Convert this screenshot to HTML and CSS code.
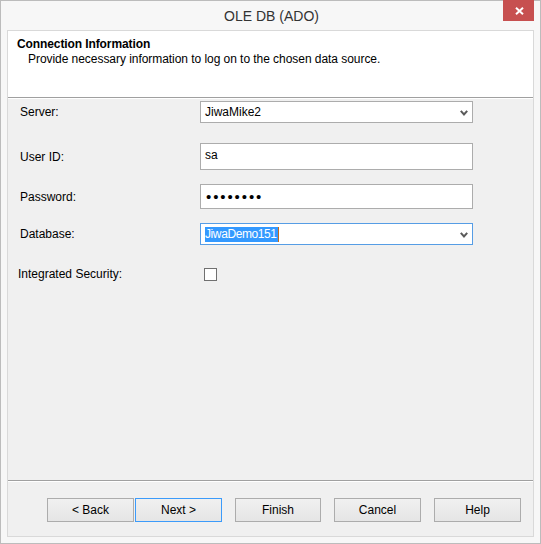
FILE: index.html
```html
<!DOCTYPE html>
<html>
<head>
<meta charset="utf-8">
<link rel="stylesheet" href="styles.css">
</head>
<body>
<div class="window">
  <div class="titlebar">
    <span class="title">OLE DB (ADO)</span>
    <div class="close">
      <svg width="9" height="8" viewBox="0 0 9 8"><path d="M1 0.8 L8 7.2 M8 0.8 L1 7.2" stroke="#fff" stroke-width="2" fill="none"/></svg>
    </div>
  </div>
  <div class="client">
    <div class="header">
      <div class="heading">Connection Information</div>
      <div class="subtitle">Provide necessary information to log on to the chosen data source.</div>
    </div>
    <div class="sep"></div>
    <div class="form">
      <div class="row row-server">
        <span class="label">Server:</span>
        <div class="combo combo-server"><span class="value">JiwaMike2</span>
          <svg class="chev" width="8" height="6" viewBox="0 0 8 6"><path d="M0.8 0.8 L4 4.4 L7.2 0.8" stroke="#5a5a5a" stroke-width="2" fill="none"/></svg>
        </div>
      </div>
      <div class="row row-user">
        <span class="label">User ID:</span>
        <div class="textbox textbox-user"><span class="value">sa</span></div>
      </div>
      <div class="row row-pass">
        <span class="label">Password:</span>
        <div class="textbox textbox-pass"><span class="dots">••••••••</span></div>
      </div>
      <div class="row row-db">
        <span class="label">Database:</span>
        <div class="combo combo-db focused"><span class="selected">JiwaDemo151</span><span class="caret"></span>
          <svg class="chev" width="8" height="6" viewBox="0 0 8 6"><path d="M0.8 0.8 L4 4.4 L7.2 0.8" stroke="#5a5a5a" stroke-width="2" fill="none"/></svg>
        </div>
      </div>
      <div class="row row-check">
        <span class="label label-check">Integrated Security:</span>
        <span class="checkbox"></span>
      </div>
    </div>
    <div class="footer">
      <div class="sep"></div>
      <div class="buttons">
        <div class="pair">
          <button class="btn">&lt; Back</button>
          <button class="btn btn-default">Next &gt;</button>
        </div>
        <button class="btn btn-narrow">Finish</button>
        <button class="btn">Cancel</button>
        <button class="btn">Help</button>
      </div>
    </div>
  </div>
</div>
</body>
</html>
```

FILE: styles.css
```css
* { box-sizing: border-box; }
html, body { margin: 0; padding: 0; }
body {
  width: 541px;
  height: 544px;
  font-family: "Liberation Sans", Arial, sans-serif;
  font-size: 12px;
  color: #000;
  background: #f7f7f7;
}
.window {
  position: relative;
  width: 541px;
  height: 544px;
  border: 1px solid #bcbcbc;
  background: #f7f7f7;
  padding: 0 6px 6px 6px;
  display: flex;
  flex-direction: column;
}
.titlebar {
  height: 29px;
  display: flex;
  align-items: center;
  justify-content: center;
  padding-top: 1px;
}
.title {
  font-size: 14px;
  color: #333;
  margin-left: 2px;
}
.close {
  position: absolute;
  top: -1px;
  right: 6px;
  width: 31px;
  height: 21px;
  background: #c75050;
  display: flex;
  align-items: center;
  justify-content: center;
  padding-top: 1px;
  padding-left: 2px;
}
.client {
  flex: 1;
  border: 1px solid #d9d9d9;
  background: #f0f0f0;
  display: flex;
  flex-direction: column;
}
.header {
  height: 66px;
  background: #fff;
  padding: 6px 0 0 9px;
  line-height: 15px;
}
.heading { font-weight: bold; letter-spacing: -0.1px; }
.subtitle { padding-left: 11px; letter-spacing: -0.05px; }
.sep {
  height: 2px;
  border-top: 1px solid #a0a0a0;
  border-bottom: 1px solid #fff;
}
.form {
  flex: 1;
  padding: 2px 0 0 12px;
  display: flex;
  flex-direction: column;
}
.row {
  display: flex;
  align-items: center;
}
.label {
  width: 180px;
  flex: none;
}
.label-check { margin-left: -2px; width: 182px; }
.row-user { margin-top: 20px; }
.row-pass { margin-top: 14px; }
.row-db { margin-top: 14px; }
.row-check { margin-top: 22px; }
.combo, .textbox {
  position: relative;
  width: 273px;
  border: 1px solid #acacac;
  background: #fff;
  display: flex;
  align-items: center;
  padding-left: 4px;
}
.combo { height: 22px; }
.textbox-user { height: 27px; align-items: flex-start; padding-top: 4px; }
.textbox-pass { height: 25px; }
.combo.focused { border-color: #569de5; }
.chev {
  position: absolute;
  right: 4px;
  top: 8px;
}
.selected {
  background: #3399ff;
  color: #fff;
  line-height: 15px;
  letter-spacing: -0.4px;
  padding-right: 1px;
}
.caret {
  width: 1px;
  height: 15px;
  background: #c46a1a;
}
.dots {
  font-size: 15px;
  letter-spacing: 1.9px;
  line-height: 15px;
  margin-left: 1px;
}
.checkbox {
  width: 13px;
  height: 13px;
  border: 1px solid #707070;
  background: #fff;
  margin-left: 4px;
}
.footer {
  height: 56px;
  display: flex;
  flex-direction: column;
}
.buttons {
  display: flex;
  gap: 13px;
  padding: 16px 0 0 39px;
}
.pair { display: flex; gap: 1px; }
.btn {
  width: 87px;
  height: 24px;
  border: 1px solid #acacac;
  background: linear-gradient(#f0f0f0, #e5e5e5);
  font-family: "Liberation Sans", Arial, sans-serif;
  font-size: 12px;
  color: #000;
  padding: 0;
  margin: 0;
}
.btn-narrow { width: 86px; }
.btn-default { border-color: #3c9bfa; }
```
